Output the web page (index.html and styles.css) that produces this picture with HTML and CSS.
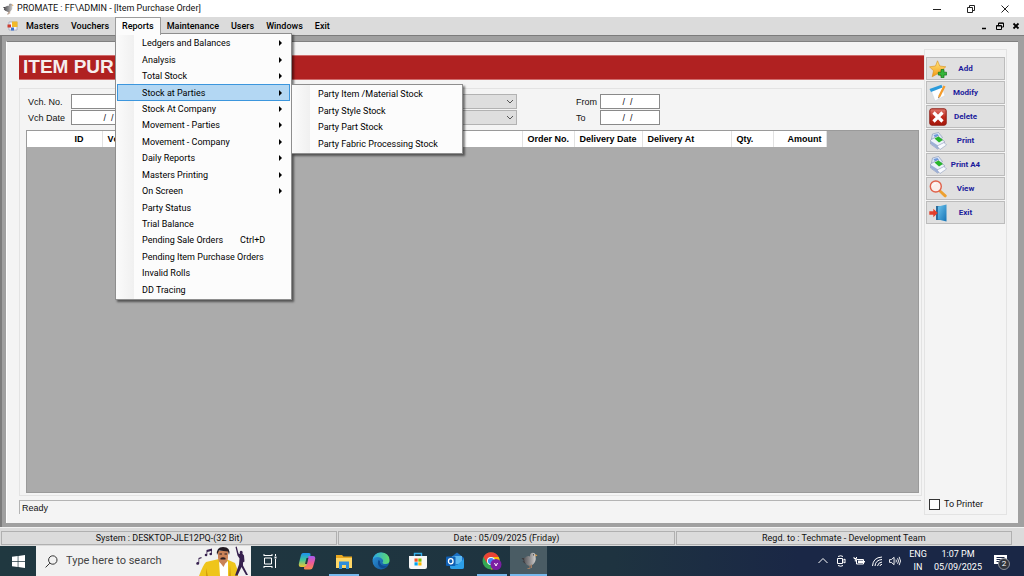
FILE: index.html
```html
<!DOCTYPE html>
<html lang="en">
<head>
<meta charset="utf-8">
<title>PROMATE : FF\ADMIN - [Item Purchase Order]</title>
<link rel="stylesheet" href="styles.css">
</head>
<body>
<svg class="defs" aria-hidden="true">
  <defs>
    <linearGradient id="gold" x1="0" y1="0" x2="0" y2="1"><stop offset="0" stop-color="#ffe680"/><stop offset="1" stop-color="#f39a12"/></linearGradient>
    <linearGradient id="red" x1="0" y1="0" x2="0" y2="1"><stop offset="0" stop-color="#e07a70"/><stop offset=".5" stop-color="#c02a1c"/><stop offset="1" stop-color="#a51508"/></linearGradient>
    <linearGradient id="door" x1="0" y1="0" x2="1" y2="1"><stop offset="0" stop-color="#6cc4ee"/><stop offset="1" stop-color="#1673b5"/></linearGradient>
    <linearGradient id="edgeA" x1="0" y1="0" x2="1" y2="0"><stop offset="0" stop-color="#2aa6e8"/><stop offset="1" stop-color="#5fdc6b"/></linearGradient>
    <linearGradient id="edgeB" x1="0" y1="0" x2="1" y2="1"><stop offset="0" stop-color="#2f9be0"/><stop offset="1" stop-color="#0f4b90"/></linearGradient>
    <linearGradient id="cop1" x1="0" y1="0" x2="0" y2="1"><stop offset="0" stop-color="#1c8ff0"/><stop offset=".5" stop-color="#3fc79a"/><stop offset="1" stop-color="#f4c430"/></linearGradient>
    <linearGradient id="cop2" x1="0" y1="0" x2="0" y2="1"><stop offset="0" stop-color="#a45cf0"/><stop offset=".5" stop-color="#ee5a98"/><stop offset="1" stop-color="#f98b4a"/></linearGradient>
    <linearGradient id="plume" x1="0" y1="0" x2="1" y2="0"><stop offset="0" stop-color="#5a595c"/><stop offset=".5" stop-color="#8f8e90"/><stop offset="1" stop-color="#d2d0cd"/></linearGradient>
    <symbol id="bird" viewBox="0 0 18 18">
      <path fill="#3d3c3f" d="M1.500 6 6 6l2 5-3 .5L2.500 9.500l1.500-.5z"/>
      <path fill="url(#plume)" d="M4 6.500Q8 3 10 4.500 9.800.8 12.800.8q3 0 2.700 3.700 1 4.500-2.500 8-3.500 2.500-6.500 0Q4 10.500 4 6.500z"/>
      <path fill="#e3a04a" d="m15.300 2 2.200 1.500-2.200 1z"/>
      <path fill="none" stroke="#a07c62" d="M10 13v3.500H7.500M11.500 12.500V16"/>
      <circle cx="13.500" cy="2.800" r=".6" fill="#222"/>
    </symbol>
    <symbol id="printer" viewBox="0 0 18 18">
      <path fill="#dfe7f5" stroke="#8292b5" stroke-width=".6" d="m3.500 2 6-1.500 4 5-5 4-6-2.500z"/>
      <path fill="#6e9bdc" d="m4.500 3 4-1 1.500 2-4 1.500z"/>
      <path fill="#edf1fa" stroke="#7d8cae" stroke-width=".6" d="m1.500 8 7-4 7 5.500v4l-7 3.500-7-5z"/>
      <path fill="#28b52b" d="m5.500 6.500 4-2 4.500 3.500-4 2.500z"/>
      <path fill="#9db0d6" d="m2 9 7 4.500 6.500-3v3l-7 3.500-6.500-5z"/>
      <path fill="#f8faff" stroke="#8292b5" stroke-width=".5" d="m8 14 7-3.500 2.500 2.500-6.500 4.500z"/>
    </symbol>
  </defs>
</svg>

<header class="titlebar">
  <svg class="app-icon"><use href="#bird"/></svg>
  <h1 class="app-title">PROMATE : FF\ADMIN - [Item Purchase Order]</h1>
  <div class="window-controls">
    <button aria-label="Minimize"><svg viewBox="0 0 10 10"><path d="M1 5.500h8"/></svg></button>
    <button aria-label="Restore"><svg viewBox="0 0 10 10"><path d="M1.500 3.500h5v5h-5zM3.500 3V1.500h5v5H7"/></svg></button>
    <button aria-label="Close"><svg viewBox="0 0 10 10"><path d="m1.500 1.500 7 7m0-7-7 7"/></svg></button>
  </div>
</header>

<nav class="menubar">
  <svg class="form-icon" viewBox="0 0 11 10"><path fill="#f4f4f8" stroke="#8c93b4" stroke-width=".6" d="M2 1h8v8H2z"/><path fill="#f0b92c" d="M5 .5h5.500V6H5z"/><path fill="#cc3b2e" d="M.5 3.500h3.500v3H.5z"/><path fill="#3c70d0" d="M4 6.500h3v3H4z"/></svg>
  <button class="menu">Masters</button>
  <button class="menu">Vouchers</button>
  <div class="menu-holder">
    <button class="menu menu-open" aria-expanded="true">Reports</button>
    <div class="dropdown" role="menu">
      <button role="menuitem" class="has-sub">Ledgers and Balances</button>
      <button role="menuitem" class="has-sub">Analysis</button>
      <button role="menuitem" class="has-sub">Total Stock</button>
      <button role="menuitem" class="has-sub selected" aria-expanded="true">Stock at Parties</button>
      <button role="menuitem" class="has-sub">Stock At Company</button>
      <button role="menuitem" class="has-sub">Movement - Parties</button>
      <button role="menuitem" class="has-sub">Movement - Company</button>
      <button role="menuitem" class="has-sub">Daily Reports</button>
      <button role="menuitem" class="has-sub">Masters Printing</button>
      <button role="menuitem" class="has-sub">On Screen</button>
      <button role="menuitem">Party Status</button>
      <button role="menuitem">Trial Balance</button>
      <button role="menuitem">Pending Sale Orders<kbd>Ctrl+D</kbd></button>
      <button role="menuitem">Pending Item Purchase Orders</button>
      <button role="menuitem">Invalid Rolls</button>
      <button role="menuitem">DD Tracing</button>
    </div>
    <div class="dropdown submenu" role="menu">
      <button role="menuitem">Party Item /Material Stock</button>
      <button role="menuitem">Party Style Stock</button>
      <button role="menuitem">Party Part Stock</button>
      <button role="menuitem">Party Fabric Processing Stock</button>
    </div>
  </div>
  <button class="menu">Maintenance</button>
  <button class="menu">Users</button>
  <button class="menu">Windows</button>
  <button class="menu">Exit</button>
  <div class="child-controls">
    <button aria-label="Minimize form"><svg viewBox="0 0 8 8"><path d="M2 6.500h4" stroke-width="1.500"/></svg></button>
    <button aria-label="Restore form"><svg viewBox="0 0 8 8"><path d="M.5 3.500h5v4h-5zM.5 4h5M2.500 3V1h5v4H6M2.500 1.300h5"/></svg></button>
    <button aria-label="Close form"><svg viewBox="0 0 8 8"><path d="m1.500 1.500 5 5m0-5-5 5" stroke-width="1.800"/></svg></button>
  </div>
</nav>

<div class="mdi">
  <main class="form">
    <section class="order">
      <h2 class="banner">ITEM PUR</h2>
      <div class="group">
        <div class="filters">
          <div class="pair voucher">
            <label for="vno">Vch. No.</label><input id="vno" type="text">
            <label for="vdate">Vch Date</label><input id="vdate" type="text" value="/  /">
          </div>
          <div class="pair party">
            <select aria-label="Party"><option></option></select>
            <select aria-label="Item"><option></option></select>
          </div>
          <div class="pair range">
            <label for="from">From</label><input id="from" type="text" value="/  /">
            <label for="to">To</label><input id="to" type="text" value="/  /">
          </div>
        </div>
        <div class="grid-area">
          <table class="orders">
            <colgroup><col class="c-id"><col class="c-vch"><col class="c-order"><col class="c-date"><col class="c-at"><col class="c-qty"><col class="c-amount"></colgroup>
            <thead><tr><th class="th-id">ID</th><th>Vch.</th><th>Order No.</th><th>Delivery Date</th><th>Delivery At</th><th>Qty.</th><th class="th-amount">Amount</th></tr></thead>
          </table>
        </div>
      </div>
      <p class="ready">Ready</p>
    </section>

    <aside class="side">
      <button class="action"><svg viewBox="0 0 18 18"><path fill="url(#gold)" stroke="#d98e1b" stroke-width=".6" d="m8.500.8 2.300 5.200 6 .8-4.500 4 1.200 6-5-3-5.300 3 1.300-6L.5 6.800l6-.8z"/><path fill="#35b53a" stroke="#15701a" stroke-width=".7" d="M12 9.500h3v2.700h2.600v2.900H15v2.600h-3v-2.600H9.300v-2.900H12z"/></svg><span>Add</span></button>
      <button class="action"><svg viewBox="0 0 18 18"><path fill="#fdfeff" stroke="#c6d3de" stroke-width=".5" d="m2 6 11-3.500 3 9L6 17z"/><path fill="#2c9bdb" d="M.5 5 12.500.8l1 2.700L2 8z"/><path fill="#f49b2b" d="m14.500 1.500 2 1-5 10-2 1.500v-2.500z"/><path fill="#5f4b38" d="m9.500 12.500 1 .7-1.200 1.300z"/></svg><span>Modify</span></button>
      <button class="action"><svg viewBox="0 0 18 18"><rect x=".8" y=".8" width="16.400" height="16.400" rx="2" fill="url(#red)" stroke="#8e1b12"/><path d="m4.500 4.500 9 9m0-9-9 9" stroke="#fff" stroke-width="3.200"/></svg><span>Delete</span></button>
      <button class="action"><svg><use href="#printer"/></svg><span>Print</span></button>
      <button class="action"><svg><use href="#printer"/></svg><span>Print A4</span></button>
      <button class="action"><svg viewBox="0 0 18 18"><path stroke="#eda02f" stroke-width="3" stroke-linecap="round" d="m11.500 11.500 4.700 4.300"/><circle cx="6.800" cy="6.500" r="5.500" fill="#fbeeea" stroke="#e0614a" stroke-width="1.400"/><path fill="none" stroke="#fff" d="M3.500 6Q4 3.500 7 3.300"/></svg><span>View</span></button>
      <button class="action"><svg viewBox="0 0 18 18"><path fill="#2c6c9c" d="M7 2h9v14H7z"/><path fill="url(#door)" d="m9 2.500 8.500-2v17L9 15.500z"/><path fill="#e3402c" d="M.3 7.300h4V4.700l4.500 4.300-4.500 4.300v-2.600h-4z"/></svg><span>Exit</span></button>
      <label class="to-printer"><input type="checkbox">To Printer</label>
    </aside>
  </main>
</div>

<footer class="statusbar">
  <span>System : DESKTOP-JLE12PQ-(32 Bit)</span>
  <span>Date : 05/09/2025 (Friday)</span>
  <span>Regd. to : Techmate - Development Team</span>
</footer>

<div class="taskbar">
  <button class="start" aria-label="Start"><svg viewBox="0 0 13 13"><path fill="#fff" d="m0 1.800 5.700-.8v5.100H0zM6.400.9 13 0v6.100H6.400zM0 6.800h5.700V12L0 11.200zm6.400 0H13V13l-6.600-.9z"/></svg></button>
  <div class="search">
    <svg class="lens" viewBox="0 0 13 13"><circle cx="7.800" cy="5" r="4.200"/><path d="m4.800 8.200-4.200 4.200"/></svg>
    <input type="text" aria-label="Search" placeholder="Type here to search">
    <svg class="doodle" viewBox="0 0 56 30">
      <path fill="#36204e" d="M3.500 17v-5l3-1v1.200l-2.300.8v4.500a1.500 1.300 0 1 1-.7-1.200zM11.500 8V4L17 2.500V8a1.300 1.200 0 1 1-.8-1V5l-3.900 1v3a1.300 1.200 0 1 1-.8-1z"/>
      <path fill="#efc51b" d="M4 30Q8 19 11 16L24 13h7l9 4 3 8v5z"/>
      <path fill="#d49e0e" d="m11 22 2 8h-2zM35 19l1 11h-2z"/>
      <path fill="#fff" d="m24 15 4 4 5-4v15h-8z"/>
      <path fill="#c98258" d="M23 5h10v7q-1 6-5 6t-5-6zM25.500 17h5l-2 4z"/>
      <path fill="#241b22" d="M22 9q-1-8 6-8 8 0 6 8l-1-3.500-9-1zM25.500 12q2.500-1.500 5 0v1.400h-5zM24.500 7.500H27v1h-2.500zM29.500 7.500H32v1h-2.500z"/>
      <path fill="#36204e" d="m40.500 1 1.200-.4 1.800 7 1.500.5q-.8-3 1-3.300 2.200 0 1.500 3L49 9.500l.5 6-1.500 1v3l5 9.500H51l-4.500-8-4 8.500H40l4-11 .5-6-2-3z"/>
    </svg>
  </div>
  <button class="task" aria-label="Task View"><svg viewBox="0 0 18 18"><path fill="none" stroke="#fff" d="M3 3.500h8M3 14.500h8M3.500 6h7v6h-7zM3 2v2m8-2v2m-8 10v2m8-2v2M14.500 2v2m0 3v9"/><path fill="#fff" d="M13.500 4.500h2v2h-2z"/></svg></button>
  <button class="task" aria-label="Copilot"><svg viewBox="0 0 18 18"><path fill="url(#cop1)" d="M5 1h6q2 0 1.500 2l-2.500 9q-1 3-4 3H3q-3 0-2-4l2-8q.6-2 2-2z"/><path fill="url(#cop2)" d="M10.500 4H15q3 0 2 4l-2 7q-.7 2.500-3 2.500H7q-1.500 0-1-2Q8 15 9 12z"/><path fill="#203840" d="m8.500 6 2-.2L9 12H7z"/></svg></button>
  <button class="task running" aria-label="File Explorer"><svg viewBox="0 0 18 18"><path fill="#e9a820" d="M1 3h6l1.500 1.500H17V15H1z"/><path fill="#ffd766" d="M1 6h16v10H1z"/><path fill="#338edb" d="M4 9.500h10V17h-3v-4H7v4H4z"/></svg></button>
  <button class="task" aria-label="Edge"><svg viewBox="0 0 18 18"><circle cx="9" cy="9" r="8.500" fill="url(#edgeB)"/><path fill="url(#edgeA)" d="M.6 8Q2 .5 9 .5q8 0 8.500 7.500.2 4-4 4-3 0-3-1.500 1-1 .5-2.500Q9 5 5.500 5 2 5 .6 8z"/><path fill="#0f4b90" d="M6.500 8q-2 5 2 7.500 4 1.500 7-1.500-4 .5-6-1T8 9z"/></svg></button>
  <button class="task" aria-label="Microsoft Store"><svg viewBox="0 0 18 18"><path fill="none" stroke="#35aee8" stroke-width="1.400" d="M5.500 5V1.500h7V5"/><path fill="#f7f7f7" d="M0 4h18v11q0 2-2 2H2q-2 0-2-2z"/><path fill="#f25022" d="M5.500 6.500h3.200v3.200H5.500z"/><path fill="#7fba00" d="M9.300 6.500h3.200v3.200H9.300z"/><path fill="#00a4ef" d="M5.500 10.300h3.200v3.200H5.500z"/><path fill="#ffb900" d="M9.300 10.300h3.200v3.200H9.300z"/></svg></button>
  <button class="task" aria-label="Outlook"><svg viewBox="0 0 18 18"><path fill="#1b6fc2" d="m4 6 7-5.500L18 6v9q0 2-2 2H6q-2 0-2-2z"/><path fill="#5cb8f0" d="M6 4h10v8H6z"/><path fill="#2c9fe8" d="m4 9 7 4 7-6v8q0 2-2 2H6q-2 0-2-2z"/><rect y="4.500" width="9.500" height="9.500" rx="1" fill="#0f5fb3"/><ellipse cx="4.750" cy="9.200" rx="2.300" ry="2.600" fill="none" stroke="#fff" stroke-width="1.300"/></svg></button>
  <button class="task running" aria-label="Chrome"><svg class="wide" viewBox="0 0 20 18"><circle cx="9" cy="9" r="8.500" fill="#34a853"/><path fill="#ea4335" d="M1.500 5A8.500 8.500 0 0 1 16.700 5H9L5 11z"/><path fill="#fbbc05" d="M16.700 5A8.500 8.500 0 0 1 9 17.500L13 9 11 5z"/><circle cx="9" cy="9" r="4" fill="#fff"/><circle cx="9" cy="9" r="3.100" fill="#4285f4"/><circle cx="14" cy="12.500" r="5.500" fill="#7b1fa2"/><path fill="none" stroke="#fff" d="m12.500 11 1.500 3 1.500-3"/></svg></button>
  <button class="task active running" aria-label="PROMATE"><svg><use href="#bird"/></svg></button>
  <div class="tray">
    <button aria-label="Show hidden icons"><svg viewBox="0 0 12 12"><path d="m1.500 8 4.500-4.500L10.500 8"/></svg></button>
    <button aria-label="Meet Now"><svg viewBox="0 0 12 12"><path d="M2.500 3.500h5v5h-5zM7.500 5.500l2.500-1.500v4l-2.500-1.500M3 1.500q3-1.500 5 0M3 10.500q3 1.500 5 0"/></svg></button>
    <button aria-label="Battery"><svg viewBox="0 0 12 12"><path d="M3.500 4.500h7v4.500h-7zM11.500 6v1.500M1 2v1.500h2.500V2M2.300 4v2.500"/><path fill="#fff" stroke="none" d="M5 5.500h5V8H5z"/></svg></button>
    <button aria-label="Network"><svg viewBox="0 0 12 12"><path d="M1.500 11Q2 2.500 11 2M4 11q.5-6 7-6.500M6.500 11q.5-3.500 4.500-4M9 11q0-1.500 2-1.700"/></svg></button>
    <button aria-label="Volume"><svg viewBox="0 0 13 12"><path d="M.5 4.500h2l3-2.500v8l-3-2.500h-2zM7.500 4.500q1 1.500 0 3M9.300 3q2 3 0 6M11 1.500q3 4.500 0 9"/></svg></button>
    <div class="stack language"><span>ENG</span><span>IN</span></div>
    <div class="stack clock"><span>1:07 PM</span><span>05/09/2025</span></div>
    <button class="notify" aria-label="2 notifications"><svg viewBox="0 0 13 12"><path fill="#fff" stroke="none" d="M0 0h13v9H8l-3 3V9H0z"/><path stroke="#1a2746" d="M2.500 2.500h8M2.500 4.500h8M2.500 6.500h8"/></svg><span class="badge">2</span></button>
  </div>
</div>
</body>
</html>
```
FILE: styles.css
```css
* { box-sizing: border-box; }

body {
  margin: 0;
  min-height: 100vh;
  display: flex;
  flex-direction: column;
  background: #dbdbdb;
  color: #111;
  font: 9px/12px Roboto, "Open Sans", sans-serif;
}

button, input, select { font: inherit; color: inherit; }
button { margin: 0; padding: 0; border: 0; background: none; }
h1, h2, p { margin: 0; font-weight: 400; }
.defs { position: absolute; width: 0; height: 0; }

/* Title bar */
.titlebar {
  display: flex;
  align-items: center;
  height: 17px;
  padding-left: 2px;
  background: #fff;
}
.app-icon { width: 12px; height: 12px; margin-right: 3px; }
.app-title { flex: 1; font-size: 9px; line-height: 17px; color: #111; }
.window-controls { display: flex; gap: 24px; padding-right: 14px; }
.window-controls button { display: flex; }
.window-controls svg { width: 10px; height: 10px; fill: none; stroke: #222; stroke-width: 1; }

/* Menu bar */
.menubar {
  display: flex;
  align-items: stretch;
  height: 18px;
  padding-left: 7px;
  background: #dbdbdb;
}
.form-icon { width: 11px; height: 10px; margin: 4px 2px 0 0; }
.menu { height: 18px; padding: 0 6px; color: #000; font-weight: 500; }
.menu-holder { position: relative; }
.menu-open {
  position: relative;
  z-index: 3;
  padding: 0 6px 1px;
  border: 1px solid #9c9c9c;
  border-bottom: 0;
  background: #fcfcfc;
}
.child-controls { display: flex; align-items: center; gap: 8px; margin-left: auto; padding-right: 4px; }
.child-controls button { display: flex; }
.child-controls svg { width: 8px; height: 8px; fill: none; stroke: #000; }

.dropdown {
  position: absolute;
  z-index: 2;
  top: 16px;
  left: 0;
  width: 177px;
  height: 267px;
  padding: 1px;
  display: grid;
  grid-auto-rows: 1fr;
  border: 1px solid #8e8e8e;
  background: linear-gradient(to right, #fbfbfb, #f0f0f0 18px, #fcfcfc 18px);
  box-shadow: 2px 2px 2px rgba(0, 0, 0, .5);
}
.dropdown button {
  display: flex;
  align-items: center;
  padding: 0 7px 0 24px;
  border: 1px solid transparent;
  color: #000;
  text-align: left;
  white-space: nowrap;
}
.dropdown kbd { margin-left: 17px; font: inherit; }
.dropdown .has-sub::after {
  content: "";
  margin-left: auto;
  border: 3px solid transparent;
  border-left-color: #000;
  border-right: 0;
}
.dropdown .selected { background: #b3d7f3; border-color: #3c96dd; }
.submenu { z-index: 4; top: 67px; left: 176px; width: 172px; height: 70px; }

/* Form window */
.mdi {
  flex: 1;
  display: flex;
  padding: 5px 6px 4px 4px;
  border: 1px solid #7c7c7c;
  border-width: 1px 0 0 2px;
  background: #a0a0a0;
}
.form {
  flex: 1;
  display: grid;
  grid-template-columns: 1fr 83px;
  padding: 7px 11px 8px 12px;
  border-top: 1px solid #808080;
  border-left: 1px solid #fff;
  background: #f4f4f4;
}
.order { display: flex; flex-direction: column; padding: 6px 0 1px; }
.banner {
  height: 25px;
  padding-left: 4px;
  border: 1px solid #cf6d6d;
  border-width: 1px 0;
  background: #b02121;
  color: #f6eeee;
  font: 700 19px/22px "Liberation Sans", Arial, sans-serif;
}
.group {
  flex: 1;
  display: flex;
  flex-direction: column;
  margin: 8px 2px 4px 0;
  padding: 5px 2px 2px 6px;
  border: 1px solid #e3e3e3;
}
.filters { display: flex; gap: 59px; }
.pair {
  display: grid;
  grid-auto-rows: 15px;
  row-gap: 1px;
  align-items: center;
  font-family: "Liberation Sans", Arial, sans-serif;
}
.voucher { grid-template-columns: 45px 80px; }
.voucher label { padding-left: 2px; }
.party { grid-template-columns: 307px; }
.range { grid-template-columns: 24px 60px; }
.pair input {
  width: 100%;
  height: 15px;
  padding: 0 5px 0 0;
  border: 1px solid #8a8a8a;
  background: #fff;
  text-align: center;
  white-space: pre;
}
.pair select {
  width: 100%;
  height: 15px;
  border: 1px solid #b2b2b2;
  border-radius: 0;
  appearance: none;
  background: #dedede url("data:image/svg+xml,%3Csvg xmlns='http://www.w3.org/2000/svg' width='8' height='5'%3E%3Cpath d='m1 1 3 3 3-3' fill='none' stroke='%23555'/%3E%3C/svg%3E") no-repeat right 2px center;
}
.grid-area {
  flex: 1;
  margin-top: 5px;
  border: 1px solid #9a9a9a;
  background: #ababab;
}
.orders {
  table-layout: fixed;
  width: 799px;
  border-collapse: collapse;
  background: #fff;
  font: 9px/16px "Liberation Sans", Arial, sans-serif;
}
.c-id { width: 75px; }
.c-vch { width: 420px; }
.c-order { width: 52px; }
.c-date { width: 68px; }
.c-at { width: 89px; }
.c-qty { width: 42px; }
.c-amount { width: 53px; }
.orders th {
  height: 16px;
  padding: 0 0 0 5px;
  border-right: 1px solid #e2e2e2;
  color: #000;
  text-align: left;
  white-space: nowrap;
}
.orders .th-id { padding-right: 18px; text-align: right; }
.orders .th-amount { padding-right: 4px; text-align: right; }
.ready {
  height: 14px;
  margin-right: 3px;
  padding-left: 2px;
  border: 1px solid #b4b4b4;
  border-width: 1px 0 0 1px;
  font: 9px/14px "Liberation Sans", Arial, sans-serif;
}

/* Action panel */
.side {
  display: flex;
  flex-direction: column;
  gap: 1px;
  padding: 7px 1px 2px 1px;
  border: 1px solid #e3e3e3;
}
.action {
  display: flex;
  align-items: center;
  height: 23px;
  padding: 0 20px 0 2px;
  border: 1px solid #bcbcbc;
  background: #e0e0e0;
  color: #1c1c9c;
  font-size: 8px;
  font-weight: 700;
}
.action svg { width: 18px; height: 18px; flex: none; }
.action span { flex: 1; text-align: center; white-space: nowrap; }
.to-printer { display: flex; align-items: center; gap: 4px; margin-top: auto; padding: 0 0 2px 3px; }
.to-printer input {
  width: 11px;
  height: 11px;
  margin: 0;
  border: 1px solid #333;
  background: #fff;
  appearance: none;
}

/* Status bar */
.statusbar {
  display: grid;
  grid-template-columns: repeat(3, 1fr);
  gap: 1px;
  height: 19px;
  padding: 3px 12px 2px 1px;
  border-top: 1px solid #f2f2f2;
  background: #dbdbdb;
}
.statusbar span { border: 1px solid #b0b0b0; text-align: center; }

/* Taskbar */
.taskbar {
  display: flex;
  height: 30px;
  background: linear-gradient(to right, #203840, #1e3340 60%, #1a2746 78%);
  color: #fff;
}
.start { width: 36px; display: flex; align-items: center; justify-content: center; }
.start svg { width: 13px; height: 13px; }
.search {
  display: flex;
  align-items: center;
  width: 215px;
  padding-left: 9px;
  background: #f1f1f1;
}
.lens { width: 13px; height: 13px; fill: none; stroke: #333; flex: none; }
.search input {
  flex: 1;
  min-width: 0;
  padding: 0 0 0 8px;
  border: 0;
  background: none;
  font-size: 11px;
}
.search input::placeholder { color: #444; opacity: 1; }
.doodle { width: 56px; height: 30px; flex: none; }
.task { width: 37px; display: flex; align-items: center; justify-content: center; }
.task svg { width: 18px; height: 18px; }
.task .wide { width: 20px; }
.running { background: linear-gradient(#76b9ed, #76b9ed) center bottom / 30px 2px no-repeat; }
.active { background: linear-gradient(#76b9ed, #76b9ed) bottom / 100% 2px no-repeat #4a5c64; }
.tray { display: flex; align-items: center; margin-left: auto; padding-right: 12px; }
.tray button { width: 18px; display: flex; justify-content: center; }
.tray svg { width: 12px; height: 12px; fill: none; stroke: #fff; }
.stack { display: flex; flex-direction: column; text-align: center; line-height: 13px; font-size: 9px; }
.language { width: 28px; }
.clock { width: 52px; }
.tray .notify { position: relative; width: 24px; margin-left: 4px; }
.tray .notify svg { width: 13px; height: 12px; }
.badge {
  position: absolute;
  left: 10px;
  top: 3px;
  width: 12px;
  height: 12px;
  border: 1px solid #8a8f98;
  border-radius: 50%;
  background: #30343c;
  font-size: 8px;
  line-height: 10px;
  text-align: center;
}
```
